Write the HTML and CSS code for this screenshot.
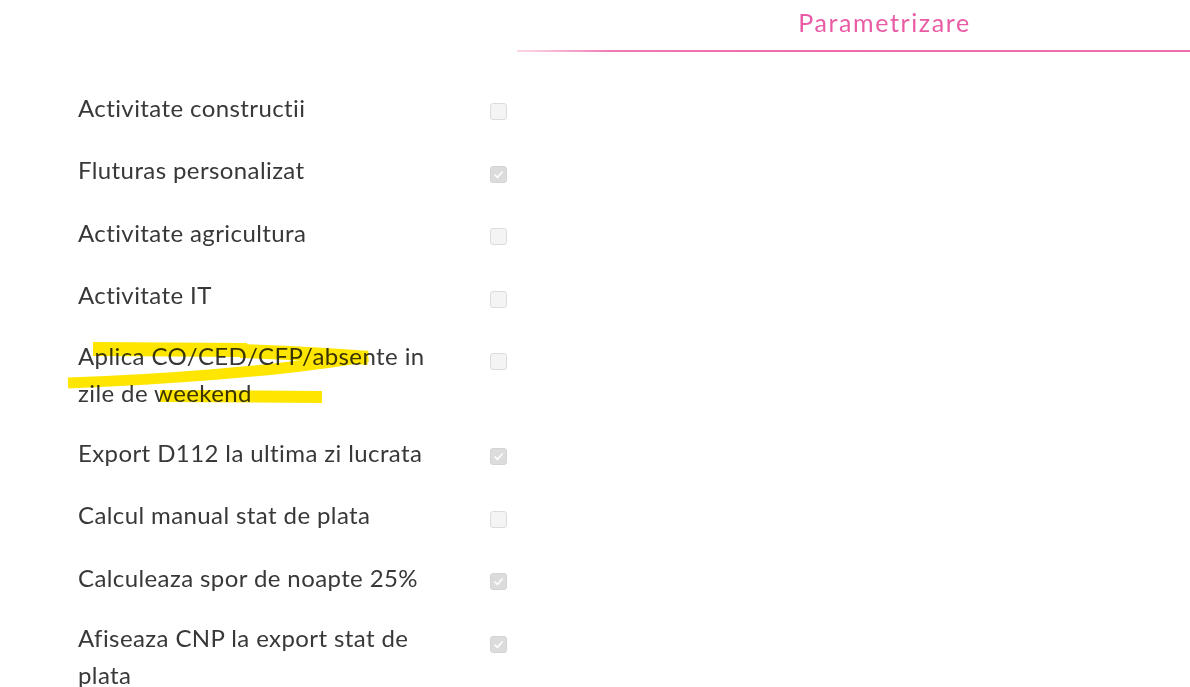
FILE: index.html
```html
<!DOCTYPE html>
<html lang="ro">
<head>
<meta charset="utf-8">
<title>Parametrizare</title>
<link rel="stylesheet" href="styles.css">
</head>
<body>
<div class="page">
  <div class="header">
    <div class="title">Parametrizare</div>
    <div class="rule"></div>
  </div>
  <div class="list">
    <div class="row"><div class="label">Activitate constructii</div><span class="cb"></span></div>
    <div class="row"><div class="label">Fluturas personalizat</div><span class="cb checked"><svg viewBox="0 0 17 17"><path d="M4.5 9 L7.3 11.8 L12.6 5.6"/></svg></span></div>
    <div class="row"><div class="label">Activitate agricultura</div><span class="cb"></span></div>
    <div class="row"><div class="label">Activitate IT</div><span class="cb"></span></div>
    <div class="row">
      <svg class="marker" viewBox="0 0 400 100" width="400" height="100">
        <path d="M33 23 L187 24"/>
        <path d="M180 25 Q 250 27 308 32"/>
        <path d="M8 57 C 90 54, 220 46, 308 30" class="thin"/>
        <path d="M100 70 L262 71" class="thin2"/>
      </svg>
      <div class="label">Aplica CO/CED/CFP/absente in<br>zile de weekend</div><span class="cb"></span>
    </div>
    <div class="row"><div class="label">Export D112 la ultima zi lucrata</div><span class="cb checked"><svg viewBox="0 0 17 17"><path d="M4.5 9 L7.3 11.8 L12.6 5.6"/></svg></span></div>
    <div class="row"><div class="label">Calcul manual stat de plata</div><span class="cb"></span></div>
    <div class="row"><div class="label">Calculeaza spor de noapte 25%</div><span class="cb checked"><svg viewBox="0 0 17 17"><path d="M4.5 9 L7.3 11.8 L12.6 5.6"/></svg></span></div>
    <div class="row"><div class="label">Afiseaza CNP la export stat de plata</div><span class="cb checked"><svg viewBox="0 0 17 17"><path d="M4.5 9 L7.3 11.8 L12.6 5.6"/></svg></span></div>
  </div>
</div>
</body>
</html>
```
FILE: styles.css
```css
html, body {
  margin: 0;
  padding: 0;
  background: #ffffff;
}
body {
  font-family: Lato, "Noto Sans", sans-serif;
  color: #383838;
  overflow: hidden;
}
.page {
  display: grid;
  grid-template-columns: 517px 1fr;
  grid-template-rows: 52px auto;
  row-gap: 24px;
  width: 1190px;
  height: 687px;
}
.header {
  grid-column: 2;
  grid-row: 1;
  display: flex;
  flex-direction: column;
  justify-content: flex-end;
}
.title {
  font-size: 25px;
  line-height: 30px;
  letter-spacing: 1.6px;
  color: #ea5ba6;
  text-align: center;
  padding-left: 62px;
  padding-bottom: 13px;
}
.rule {
  height: 2px;
  background: linear-gradient(90deg, #fbd9e9 0%, #f6b3d3 6%, #ef79b4 14%, #ee6aac 45%, #ef6eae 100%);
}
.list {
  grid-column: 1;
  grid-row: 2;
  display: flex;
  flex-direction: column;
  padding-left: 78px;
}
.row {
  position: relative;
  display: flex;
  align-items: flex-start;
  min-height: 62.5px;
  padding: 10.5px 0;
  box-sizing: border-box;
}
.label {
  width: 380px;
  align-self: center;
  font-size: 24px;
  line-height: 37px;
  letter-spacing: 0.4px;
}
.cb {
  width: 17px;
  height: 17px;
  box-sizing: border-box;
  margin-left: 32px;
  margin-top: 16.5px;
  border: 1px solid #dcdcdc;
  border-radius: 3px;
  background: #f4f4f4;
  display: flex;
}
.cb.checked {
  background: #dcdcdc;
  border-color: #d4d4d4;
}
.cb svg {
  width: 15px;
  height: 15px;
}
.cb svg path {
  fill: none;
  stroke: #ffffff;
  stroke-width: 1.8;
  stroke-linecap: round;
  stroke-linejoin: round;
}
.marker {
  position: absolute;
  left: -18px;
  top: 0;
  mix-blend-mode: multiply;
  pointer-events: none;
}
.marker path {
  fill: none;
  stroke: #ffe600;
  stroke-width: 14;
  stroke-linecap: butt;
}
.marker path.thin {
  stroke-width: 11;
}
.marker path.thin2 {
  stroke-width: 12;
}
```
